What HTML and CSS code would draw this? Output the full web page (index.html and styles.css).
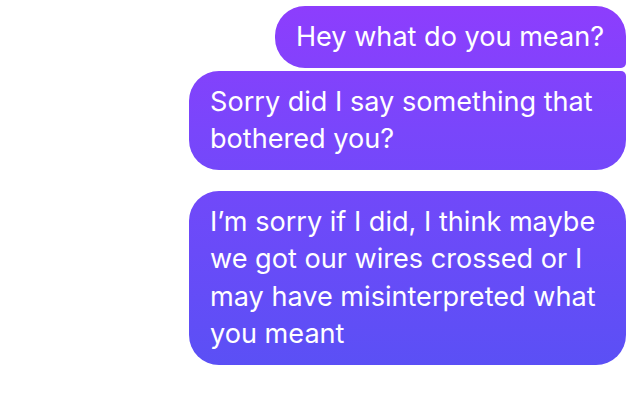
FILE: index.html
```
<!DOCTYPE html>
<html>
<head>
<meta charset="utf-8">
<link rel="stylesheet" href="styles.css">
</head>
<body>
<div class="thread">
  <div class="bubble first">Hey what do you mean?</div>
  <div class="bubble middle">Sorry did I say something that bothered you?</div>
  <div class="bubble last">I’m sorry if I did, I think maybe we got our wires crossed or I may have misinterpreted what you meant</div>
</div>
</body>
</html>
```
FILE: styles.css
```
html, body {
  margin: 0;
  padding: 0;
  background: #ffffff;
}
body {
  width: 640px;
  height: 400px;
  overflow: hidden;
  font-family: Inter, "Liberation Sans", sans-serif;
}
.thread {
  display: flex;
  flex-direction: column;
  align-items: flex-end;
  padding: 6px 14px 0 0;
}
.bubble {
  box-sizing: border-box;
  max-width: 437px;
  padding: 12px 22px 12px 21px;
  color: #ffffff;
  font-size: 27.1px;
  line-height: 37.5px;
  letter-spacing: 0;
  border-radius: 30px;
  background: linear-gradient(180deg, #8e3dfd 0px, #7946fb 130px, #5a50f5 370px);
  background-attachment: fixed;
}
.first {
  border-bottom-right-radius: 5px;
}
.middle {
  margin-top: 3px;
  border-top-right-radius: 5px;
}
.last {
  margin-top: 21px;
}
```
